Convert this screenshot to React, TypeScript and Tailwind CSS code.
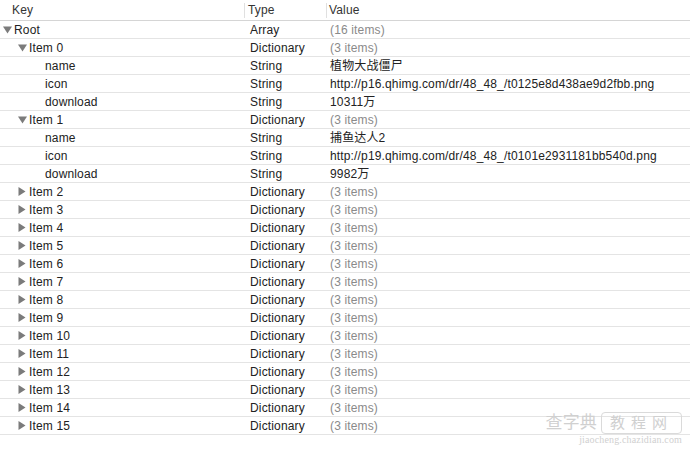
import React from "react"

type Row = {
  key: string
  level: number
  toggle?: "open" | "closed"
  type: string
  value: string
  muted?: boolean
}

const rows: Row[] = [
  { key: "Root", level: 0, toggle: "open", type: "Array", value: "(16 items)", muted: true },
  { key: "Item 0", level: 1, toggle: "open", type: "Dictionary", value: "(3 items)", muted: true },
  { key: "name", level: 2, type: "String", value: "植物大战僵尸" },
  { key: "icon", level: 2, type: "String", value: "http://p16.qhimg.com/dr/48_48_/t0125e8d438ae9d2fbb.png" },
  { key: "download", level: 2, type: "String", value: "10311万" },
  { key: "Item 1", level: 1, toggle: "open", type: "Dictionary", value: "(3 items)", muted: true },
  { key: "name", level: 2, type: "String", value: "捕鱼达人2" },
  { key: "icon", level: 2, type: "String", value: "http://p19.qhimg.com/dr/48_48_/t0101e2931181bb540d.png" },
  { key: "download", level: 2, type: "String", value: "9982万" },
  ...Array.from({ length: 14 }, (_, i) => ({
    key: `Item ${i + 2}`,
    level: 1,
    toggle: "closed" as const,
    type: "Dictionary",
    value: "(3 items)",
    muted: true,
  })),
]

function Disclosure({ open }: { open: boolean }) {
  return open ? (
    <svg width="9" height="8" viewBox="0 0 9 8" className="shrink-0">
      <path d="M0 0.5 H9 L4.5 7.5 Z" fill="#7b7b7b" />
    </svg>
  ) : (
    <svg width="8" height="9" viewBox="0 0 8 9" className="shrink-0">
      <path d="M0.5 0 V9 L7.5 4.5 Z" fill="#7b7b7b" />
    </svg>
  )
}

const indents = ["pl-[3px]", "pl-[18px]", "pl-[34px]"]

export default function App() {
  return (
    <div
      className="relative w-[690px] h-[450px] overflow-hidden bg-white text-[12px] tracking-[0.15px] text-[#222]"
      style={{ fontFamily: '"Liberation Sans", "Noto Sans CJK SC", sans-serif' }}
    >
      {/* Header */}
      <div className="flex h-[21px] items-center border-b border-[#d5d5d5] text-[#333]">
        <div className="w-[244px] pl-[12px]">Key</div>
        <div className="w-[82px] h-[15px] flex items-center border-l border-[#e0e0e0] pl-[3px]">Type</div>
        <div className="flex-1 h-[15px] flex items-center border-l border-[#e0e0e0] pl-[2px]">Value</div>
      </div>

      {/* Rows */}
      {rows.map((r, i) => (
        <div key={i} className="flex h-[18px] items-center border-b border-[#e4e4e4]">
          <div className={`w-[244px] flex items-center ${indents[r.level]}`}>
            <span className="w-[11px] flex items-center">
              {r.toggle && <Disclosure open={r.toggle === "open"} />}
            </span>
            <span>{r.key}</span>
          </div>
          <div className="w-[82px] pl-[6px]">{r.type}</div>
          <div className={`flex-1 pl-[4px] whitespace-nowrap ${r.muted ? "text-[#8a8a8a]" : ""}`}>{r.value}</div>
        </div>
      ))}

      {/* Watermark */}
      <div className="absolute right-[8px] bottom-[4px] flex flex-col items-end text-[#d0d0d0] pointer-events-none">
        <div className="flex items-center gap-1 text-[17px] leading-[20px]">
          <span>查字典</span>
          <span className="border border-[#dadada] rounded-[4px] px-2 tracking-[6px] text-[15px]">教程网</span>
        </div>
        <div className="text-[10px] leading-[12px]" style={{ fontFamily: '"Liberation Serif", serif' }}>
          jiaocheng.chazidian.com
        </div>
      </div>
    </div>
  )
}
